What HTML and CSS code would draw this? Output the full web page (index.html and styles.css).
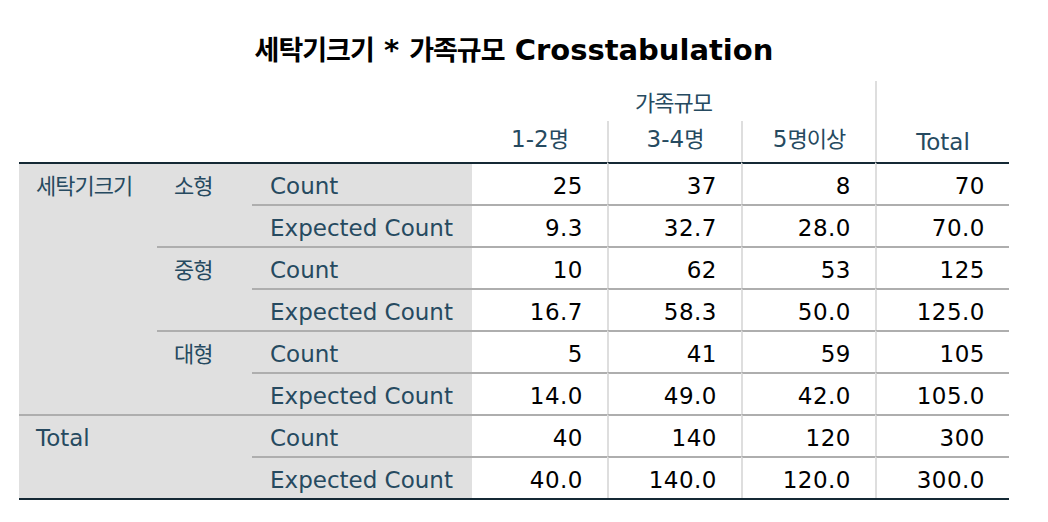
FILE: index.html
```html
<!DOCTYPE html>
<html lang="ko">
<head>
<meta charset="utf-8">
<title>세탁기크기 * 가족규모 Crosstabulation</title>
<link rel="stylesheet" href="styles.css">
</head>
<body>
<div class="page">
  <h1 class="title"><span class="ko">세탁기크기</span> * <span class="ko">가족규모</span> Crosstabulation</h1>
  <table class="xtab">
    <colgroup>
      <col class="c-s1"><col class="c-s2"><col class="c-s3">
      <col class="c-d1"><col class="c-d"><col class="c-d"><col class="c-d">
    </colgroup>
    <thead>
      <tr class="h1">
        <th class="corner" colspan="3" rowspan="2"></th>
        <th class="grp" colspan="3"><span class="ko">가족규모</span></th>
        <th class="tot sep" rowspan="2">Total</th>
      </tr>
      <tr class="h2">
        <th class="colh">1-2<span class="ko">명</span></th>
        <th class="colh sep">3-4<span class="ko">명</span></th>
        <th class="colh sep">5<span class="ko">명이상</span></th>
      </tr>
    </thead>
    <tbody>
      <tr class="first">
        <td class="stub s1" rowspan="6"><span class="ko">세탁기크기</span></td>
        <td class="stub s2" rowspan="2"><span class="ko">소형</span></td>
        <td class="stub s3">Count</td>
        <td class="num">25</td><td class="num sep">37</td><td class="num sep">8</td><td class="num sep">70</td>
      </tr>
      <tr>
        <td class="stub s3">Expected Count</td>
        <td class="num">9.3</td><td class="num sep">32.7</td><td class="num sep">28.0</td><td class="num sep">70.0</td>
      </tr>
      <tr>
        <td class="stub s2" rowspan="2"><span class="ko">중형</span></td>
        <td class="stub s3">Count</td>
        <td class="num">10</td><td class="num sep">62</td><td class="num sep">53</td><td class="num sep">125</td>
      </tr>
      <tr>
        <td class="stub s3">Expected Count</td>
        <td class="num">16.7</td><td class="num sep">58.3</td><td class="num sep">50.0</td><td class="num sep">125.0</td>
      </tr>
      <tr>
        <td class="stub s2" rowspan="2"><span class="ko">대형</span></td>
        <td class="stub s3">Count</td>
        <td class="num">5</td><td class="num sep">41</td><td class="num sep">59</td><td class="num sep">105</td>
      </tr>
      <tr>
        <td class="stub s3">Expected Count</td>
        <td class="num">14.0</td><td class="num sep">49.0</td><td class="num sep">42.0</td><td class="num sep">105.0</td>
      </tr>
      <tr>
        <td class="stub s1" colspan="2" rowspan="2">Total</td>
        <td class="stub s3">Count</td>
        <td class="num">40</td><td class="num sep">140</td><td class="num sep">120</td><td class="num sep">300</td>
      </tr>
      <tr>
        <td class="stub s3">Expected Count</td>
        <td class="num">40.0</td><td class="num sep">140.0</td><td class="num sep">120.0</td><td class="num sep">300.0</td>
      </tr>
    </tbody>
  </table>
</div>
</body>
</html>
```

FILE: styles.css
```css
html, body {
  margin: 0;
  padding: 0;
  background: #ffffff;
}

.page {
  width: 990px;
  padding: 30px 0 0 19px;
  font-family: "DejaVu Sans", "Noto Sans CJK KR", sans-serif;
}

.ko {
  font-family: "Noto Sans CJK KR", sans-serif;
  font-size: 22px;
  line-height: 20px;
  letter-spacing: -1px;
}

.title {
  margin: 0 0 11px 0;
  height: 40px;
  line-height: 40px;
  font-size: 29px;
  font-weight: bold;
  color: #000000;
  text-align: center;
  white-space: nowrap;
}

.title .ko {
  font-size: 27px;
  line-height: 28px;
  letter-spacing: -1px;
}

.xtab {
  width: 990px;
  table-layout: fixed;
  border-collapse: separate;
  border-spacing: 0;
  border-bottom: 2px solid #152935;
  font-size: 23px;
}

.c-s1 { width: 138px; }
.c-s2 { width: 95px; }
.c-s3 { width: 220px; }
.c-d1 { width: 135px; }
.c-d { width: 134px; }

.xtab th {
  font-weight: normal;
  color: #264a60;
  padding: 0;
  line-height: 28px;
  text-align: center;
  white-space: nowrap;
}

.h1 .grp {
  padding: 8px 0 4px;
}

.h2 .colh {
  padding: 4px 0 9px;
}

.xtab th.tot {
  vertical-align: bottom;
  padding-bottom: 6px;
}

.xtab td {
  border-top: 2px solid #aeaeae;
  padding: 8px 0 4px;
  line-height: 28px;
  vertical-align: top;
  white-space: nowrap;
}

.xtab tr.first td {
  border-top-color: #152935;
}

.stub {
  background: #e0e0e0;
  color: #264a60;
  text-align: left;
}

.s1 { padding-left: 17px !important; }
.s2 { padding-left: 17px !important; }
.s3 { padding-left: 18px !important; }

.num {
  color: #000000;
  text-align: right;
  padding-right: 24px !important;
  letter-spacing: 0.5px;
}

.sep {
  border-left: 2px solid #dedede;
}
```
